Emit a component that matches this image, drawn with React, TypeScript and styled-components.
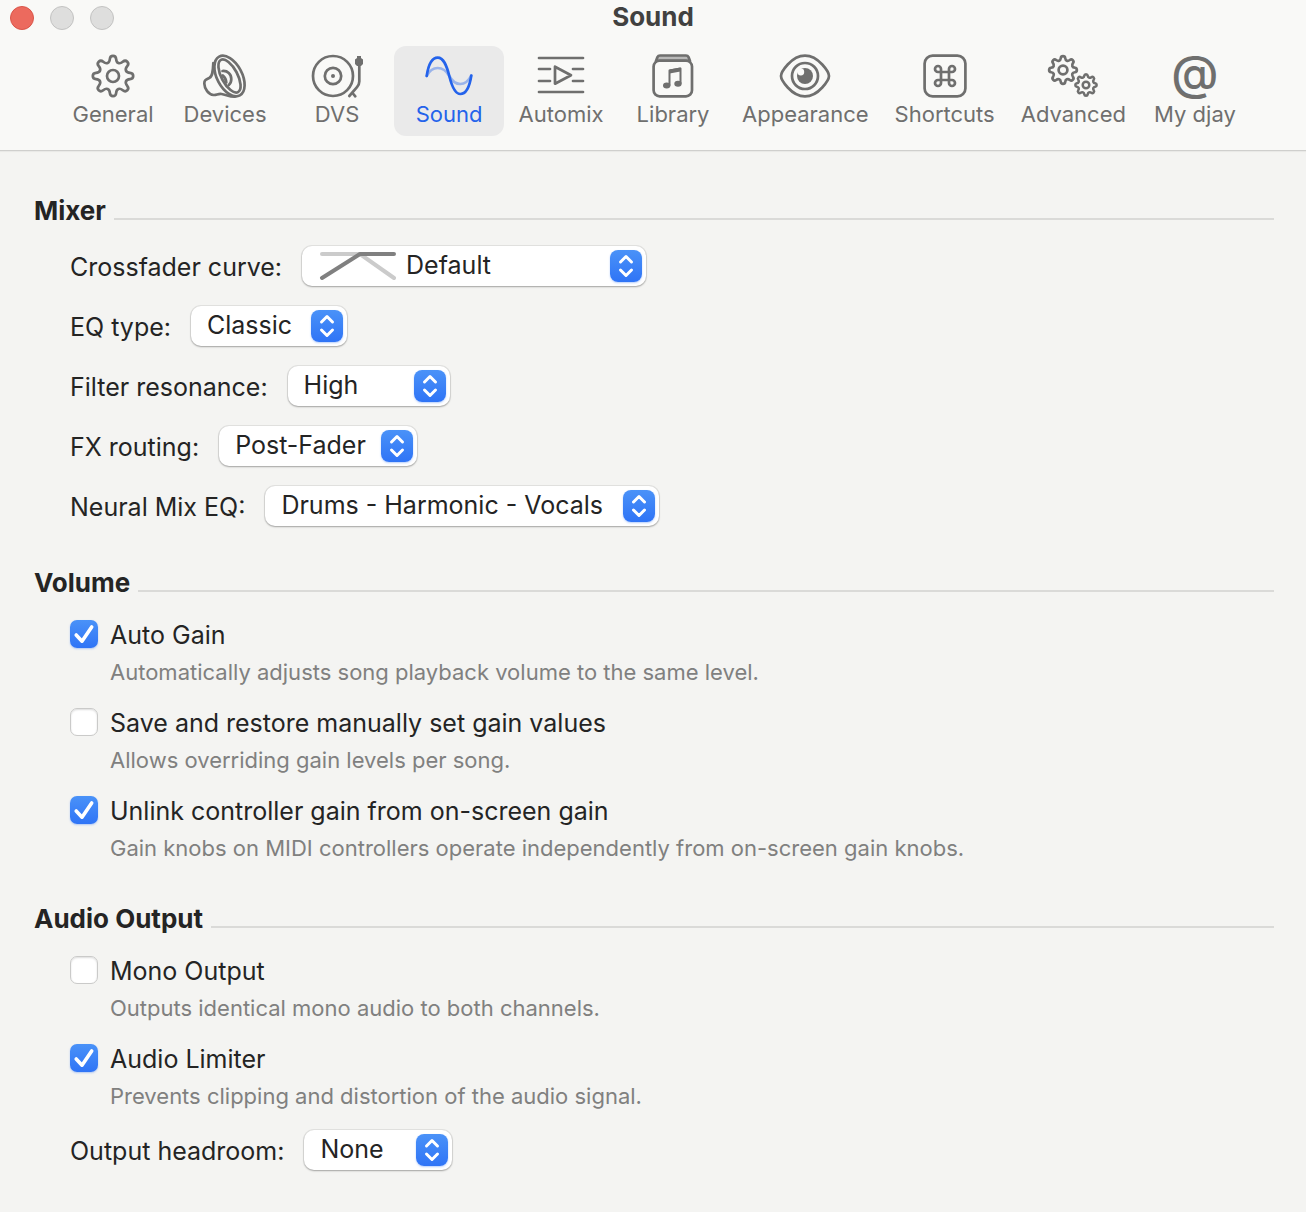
import React from "react";
import styled, { createGlobalStyle } from "styled-components";

const GlobalStyle = createGlobalStyle`
  *, *::before, *::after { box-sizing: border-box; }
  body {
    margin: 0;
    background: #f4f4f2;
    color: #242424;
    font-family: Inter, "Liberation Sans", sans-serif;
    font-size: 25px;
  }
  button, select, input { font: inherit; color: inherit; margin: 0; }
`;

const Window = styled.div`
  min-height: 100vh;
  background: #f4f4f2;
`;

const Header = styled.header`
  display: flex;
  flex-direction: column;
  gap: 10px;
  padding-bottom: 14px;
  background: #f9f9f7;
  border-bottom: 1px solid #cfcfcd;
  box-shadow: 0 1px 1px #e9e9e7;
`;

const TitleBar = styled.div`
  display: grid;
  grid-template-columns: 1fr auto 1fr;
  height: 36px;
`;

const WindowControls = styled.div`
  display: flex;
  align-items: center;
  gap: 16px;
  padding-left: 10px;
`;

const WindowControl = styled.button<{ $active?: boolean }>`
  width: 24px;
  height: 24px;
  padding: 0;
  border-radius: 50%;
  background: ${(p) => (p.$active ? "#ec6a5e" : "#dededd")};
  border: 1px solid ${(p) => (p.$active ? "#da5549" : "#c3c3c2")};
`;

const WindowTitle = styled.h1`
  margin: 0;
  font-size: 26px;
  line-height: 34px;
  font-weight: 700;
  color: #414140;
`;

const TabBar = styled.nav`
  display: flex;
  justify-content: center;
  gap: 2px;
  padding-left: 2px;
`;

const Tab = styled.button<{ $selected?: boolean }>`
  display: flex;
  flex-direction: column;
  align-items: center;
  min-width: 110px;
  padding: 6px 12px 8px;
  border: 0;
  border-radius: 12px;
  background: ${(p) => (p.$selected ? "#eaeaea" : "transparent")};
  color: ${(p) => (p.$selected ? "#2463eb" : "#6f6f6e")};
`;

const TabLabel = styled.span`
  font-size: 22px;
  line-height: 28px;
  white-space: nowrap;
`;

const IconFrame = styled.svg`
  display: block;
  width: 56px;
  height: 48px;
  fill: none;
  stroke: currentColor;
  stroke-width: 2.7;
  stroke-linecap: round;
  stroke-linejoin: round;
`;

const AtGlyph = styled.span`
  height: 48px;
  font-size: 48px;
  font-weight: 500;
  line-height: 42px;
`;

const Content = styled.main`
  display: flex;
  flex-direction: column;
  gap: 40px;
  padding: 44px 32px 40px 34px;
`;

const Section = styled.section`
  display: flex;
  flex-direction: column;
  gap: 18px;
`;

const SectionTitle = styled.h2`
  display: flex;
  align-items: center;
  gap: 8px;
  margin: 0;
  font-size: 26px;
  line-height: 32px;
  font-weight: 700;

  &::after {
    content: "";
    flex: 1;
    height: 2px;
    margin-top: 16px;
    background: #dadad8;
  }
`;

const SectionBody = styled.div`
  display: flex;
  flex-direction: column;
  gap: 18px;
  padding-left: 36px;
`;

const SelectRow = styled.div`
  display: flex;
  align-items: center;
  gap: 20px;
  height: 42px;
`;

const SelectLabel = styled.label`
  padding-top: 2px;
  line-height: 40px;
  white-space: nowrap;
`;

const SelectFrame = styled.div`
  position: relative;
`;

const Select = styled.select<{ $width: number; $withCurve?: boolean }>`
  display: block;
  width: ${(p) => p.$width}px;
  height: 40px;
  padding: 0 40px 2px ${(p) => (p.$withCurve ? 104 : 16)}px;
  border: 0;
  border-radius: 10px;
  background: #fff;
  box-shadow: 0 0 0 1px rgba(0, 0, 0, 0.07), 0 1px 2px rgba(0, 0, 0, 0.28);
  appearance: none;
`;

const Stepper = styled.svg`
  position: absolute;
  top: 4px;
  right: 4px;
  width: 32px;
  height: 32px;
  border-radius: 8px;
  background: linear-gradient(#4a92f8, #2f74f6);
  box-shadow: 0 1px 2px rgba(47, 116, 246, 0.35);
  pointer-events: none;
`;

const Curve = styled.svg`
  position: absolute;
  top: 4px;
  left: 16px;
  width: 80px;
  height: 32px;
  pointer-events: none;
`;

const Option = styled.div`
  display: flex;
  flex-direction: column;
  gap: 4px;
`;

const OptionLabel = styled.label`
  display: flex;
  align-items: center;
  gap: 12px;
  line-height: 36px;
`;

const Checkbox = styled.input`
  display: block;
  width: 28px;
  height: 28px;
  border: 1px solid #cacac9;
  border-radius: 7px;
  background: #fff;
  box-shadow: inset 0 1px 2px rgba(0, 0, 0, 0.14);
  appearance: none;

  &:checked {
    border-color: transparent;
    background: linear-gradient(#4a92f8, #2f74f6) border-box;
    box-shadow: 0 1px 2px rgba(47, 116, 246, 0.35);
  }
`;

const CheckFrame = styled.span`
  position: relative;
  padding-bottom: 2px;
`;

const CheckMark = styled.svg`
  position: absolute;
  top: 0;
  left: 0;
  width: 28px;
  height: 28px;
  pointer-events: none;
  visibility: hidden;

  input:checked + & { visibility: visible; }
`;

const OptionHint = styled.p`
  margin: 0;
  padding-left: 40px;
  font-size: 22px;
  line-height: 30px;
  color: #80807f;
`;

type Point = [number, number];

/** Closed outline through the points, each corner rounded by up to `radius`. */
function roundedOutline(points: Point[], radius: number): string {
  const n = points.length;
  const toward = (a: Point, b: Point): Point => {
    const d = Math.hypot(b[0] - a[0], b[1] - a[1]);
    const t = Math.min(radius, d / 2) / d;
    return [a[0] + (b[0] - a[0]) * t, a[1] + (b[1] - a[1]) * t];
  };
  const f = (p: Point) => `${p[0].toFixed(2)} ${p[1].toFixed(2)}`;
  return (
    points
      .map((p, i) => {
        const start = toward(p, points[(i + n - 1) % n]);
        const end = toward(p, points[(i + 1) % n]);
        return `${i ? "L" : "M"}${f(start)}Q${f(p)} ${f(end)}`;
      })
      .join("") + "Z"
  );
}

function gearPath(cx: number, cy: number, outer: number, inner: number, teeth: number) {
  const step = (Math.PI * 2) / teeth;
  const pts: Point[] = [];
  for (let i = 0; i < teeth; i++) {
    const a = i * step - Math.PI / 2;
    const corners: Point[] = [
      [-0.31, inner],
      [-0.18, outer],
      [0.18, outer],
      [0.31, inner],
    ];
    corners.forEach(([k, r]) =>
      pts.push([cx + r * Math.cos(a + k * step), cy + r * Math.sin(a + k * step)])
    );
  }
  return roundedOutline(pts, outer * 0.17);
}

const Icon = ({ children }: { children: React.ReactNode }) => (
  <IconFrame viewBox="0 0 56 48" aria-hidden="true">
    {children}
  </IconFrame>
);

const GeneralIcon = () => (
  <Icon>
    <path d={gearPath(28, 24, 20.4, 14.2, 8)} />
    <circle cx="28" cy="24" r="6" />
  </Icon>
);

const DevicesIcon = () => (
  <Icon>
    <g transform="rotate(-28 32.5 24)">
      <ellipse cx="32.5" cy="24" rx="12.5" ry="22" />
      <ellipse cx="32.5" cy="24" rx="8" ry="18.2" />
    </g>
    <path d="M16.3 11C16 17 16 24 12.5 25.8C9 27.5 7.3 28 7.3 31.5C7.5 37 11.5 42.5 16.5 43C19.5 43.3 21 41.5 24.5 42C29 42.7 33 45 38 44.7" />
    <path d="M25.5 19C30.5 18.5 34.3 22 34.3 27C34.3 29.5 33.5 31.5 31.8 33M25.8 23.5C28 25.5 29.3 28 29.3 30.5" />
  </Icon>
);

const DvsIcon = () => (
  <Icon>
    <circle cx="24" cy="24" r="20" />
    <circle cx="24" cy="24" r="8.2" />
    <circle cx="24" cy="24" r="2" fill="currentColor" stroke="none" />
    <path d="M48 4H52V6L54 7.5V12L52 14H48L46 12V7.5L48 6Z" fill="currentColor" stroke="none" />
    <path d="M50.3 12V29.5C50.3 32 49.5 33.5 48 35.2L40.3 44M43.5 41L46.3 44.3" />
  </Icon>
);

const SoundIcon = () => (
  <Icon>
    <path
      d="M5.7 24C8.5 18.5 12 16 16.7 16C22 16 25.5 19 28.3 24C31 29 34 32 39.3 32C44 32 47.500 29 50.3 23.5"
      opacity="0.4"
    />
    <path d="M5.7 24C7.5 12 11.5 5.7 16.7 5.7C22.5 5.7 25.5 13 28.3 24C31 35 34 42 39.3 42C44.5 42 48.5 35.5 50.3 23.5" />
  </Icon>
);

const AutomixIcon = () => (
  <Icon>
    <path d="M6 6H50M6 17H17M40 17H50M6 29H17M40 29H50M6 40H50M22 14.7L38 23.2L22 31.7Z" />
  </Icon>
);

const LibraryIcon = () => (
  <Icon>
    <path d="M11 9L12.5 5Q13.2 3.5 15 3.5H41Q42.8 3.5 43.5 5L45 9Z" fill="#b9b9b8" />
    <rect x="8.6" y="8.6" width="38.4" height="35.7" rx="6" fill="#f9f9f7" />
    <path d="M24.5 33V18.5L35.5 16.5V31" strokeWidth="2" />
    <path d="M24.5 17.5L35.5 15.5V19.5L24.5 21.5Z" fill="currentColor" stroke="none" />
    <ellipse cx="21.7" cy="33.5" rx="3.7" ry="3" fill="currentColor" stroke="none" />
    <ellipse cx="33" cy="31.7" rx="3.7" ry="3" fill="currentColor" stroke="none" />
  </Icon>
);

const AppearanceIcon = () => (
  <Icon>
    <path d="M4 24C4 20.5 14 3.6 28 3.6S52 20.5 52 24S42 44.4 28 44.4S4 27.5 4 24Z" />
    <circle cx="28" cy="24" r="13" />
    <circle cx="28" cy="24" r="8" fill="currentColor" stroke="none" />
    <circle cx="23.8" cy="20" r="3.4" fill="#f9f9f7" stroke="none" />
  </Icon>
);

const ShortcutsIcon = () => (
  <Icon>
    <rect x="7.6" y="3.6" width="40.8" height="40.8" rx="8" />
    <path d="M24 20V17A3 3 0 1 0 21 20H35A3 3 0 1 0 32 17V31A3 3 0 1 0 35 28H21A3 3 0 1 0 24 31Z" />
  </Icon>
);

const AdvancedIcon = () => (
  <Icon>
    <path d={gearPath(18, 18, 14, 10.2, 8)} />
    <circle cx="18" cy="18" r="4.4" />
    <g strokeWidth="2.5">
      <path d={gearPath(41, 33, 10.8, 8, 8)} />
      <circle cx="41" cy="33" r="3.3" />
    </g>
  </Icon>
);

const AtIcon = () => <AtGlyph aria-hidden="true">@</AtGlyph>;

const tabs = [
  { label: "General", Glyph: GeneralIcon },
  { label: "Devices", Glyph: DevicesIcon },
  { label: "DVS", Glyph: DvsIcon },
  { label: "Sound", Glyph: SoundIcon },
  { label: "Automix", Glyph: AutomixIcon },
  { label: "Library", Glyph: LibraryIcon },
  { label: "Appearance", Glyph: AppearanceIcon },
  { label: "Shortcuts", Glyph: ShortcutsIcon },
  { label: "Advanced", Glyph: AdvancedIcon },
  { label: "My djay", Glyph: AtIcon },
];

interface SelectFieldProps {
  id: string;
  label: string;
  value: string;
  width: number;
  withCurve?: boolean;
}

const SelectField = ({ id, label, value, width, withCurve }: SelectFieldProps) => (
  <SelectRow>
    <SelectLabel htmlFor={id}>{label}</SelectLabel>
    <SelectFrame>
      <Select id={id} $width={width} $withCurve={withCurve} defaultValue={value}>
        <option value={value}>{value}</option>
      </Select>
      {withCurve && (
        <Curve viewBox="0 0 80 32" fill="none" strokeWidth="4" strokeLinecap="round" strokeLinejoin="round" aria-hidden="true">
          <path d="M4 4H42L76 28" stroke="#cbcbcb" />
          <path d="M4 28L42 4H76" stroke="#808080" />
        </Curve>
      )}
      <Stepper viewBox="0 0 32 32" fill="none" stroke="#fff" strokeWidth="3" strokeLinecap="round" strokeLinejoin="round" aria-hidden="true">
        <path d="M10.5 12L16 6.5L21.5 12M10.5 20L16 25.5L21.5 20" />
      </Stepper>
    </SelectFrame>
  </SelectRow>
);

interface CheckFieldProps {
  label: string;
  hint: string;
  checked?: boolean;
}

const CheckField = ({ label, hint, checked }: CheckFieldProps) => (
  <Option>
    <OptionLabel>
      <CheckFrame>
        <Checkbox type="checkbox" defaultChecked={checked} />
        <CheckMark viewBox="0 0 28 28" fill="none" stroke="#fff" strokeWidth="3.6" strokeLinecap="round" strokeLinejoin="round" aria-hidden="true">
          <path d="M6.2 15L12 21.2L21.7 7" />
        </CheckMark>
      </CheckFrame>
      {label}
    </OptionLabel>
    <OptionHint>{hint}</OptionHint>
  </Option>
);

export default function App() {
  return (
    <Window>
      <GlobalStyle />
      <Header>
        <TitleBar>
          <WindowControls>
            <WindowControl type="button" aria-label="Close" $active />
            <WindowControl type="button" aria-label="Minimize" disabled />
            <WindowControl type="button" aria-label="Zoom" disabled />
          </WindowControls>
          <WindowTitle>Sound</WindowTitle>
        </TitleBar>
        <TabBar>
          {tabs.map(({ label, Glyph }) => (
            <Tab key={label} type="button" $selected={label === "Sound"}>
              <Glyph />
              <TabLabel>{label}</TabLabel>
            </Tab>
          ))}
        </TabBar>
      </Header>
      <Content>
        <Section>
          <SectionTitle>Mixer</SectionTitle>
          <SectionBody>
            <SelectField id="crossfader" label="Crossfader curve:" value="Default" width={344} withCurve />
            <SelectField id="eq-type" label="EQ type:" value="Classic" width={156} />
            <SelectField id="resonance" label="Filter resonance:" value="High" width={162} />
            <SelectField id="fx-routing" label="FX routing:" value="Post-Fader" width={198} />
            <SelectField id="neural-mix" label="Neural Mix EQ:" value="Drums - Harmonic - Vocals" width={394} />
          </SectionBody>
        </Section>
        <Section>
          <SectionTitle>Volume</SectionTitle>
          <SectionBody>
            <CheckField label="Auto Gain" hint="Automatically adjusts song playback volume to the same level." checked />
            <CheckField label="Save and restore manually set gain values" hint="Allows overriding gain levels per song." />
            <CheckField label="Unlink controller gain from on-screen gain" hint="Gain knobs on MIDI controllers operate independently from on-screen gain knobs." checked />
          </SectionBody>
        </Section>
        <Section>
          <SectionTitle>Audio Output</SectionTitle>
          <SectionBody>
            <CheckField label="Mono Output" hint="Outputs identical mono audio to both channels." />
            <CheckField label="Audio Limiter" hint="Prevents clipping and distortion of the audio signal." checked />
            <SelectField id="headroom" label="Output headroom:" value="None" width={148} />
          </SectionBody>
        </Section>
      </Content>
    </Window>
  );
}
